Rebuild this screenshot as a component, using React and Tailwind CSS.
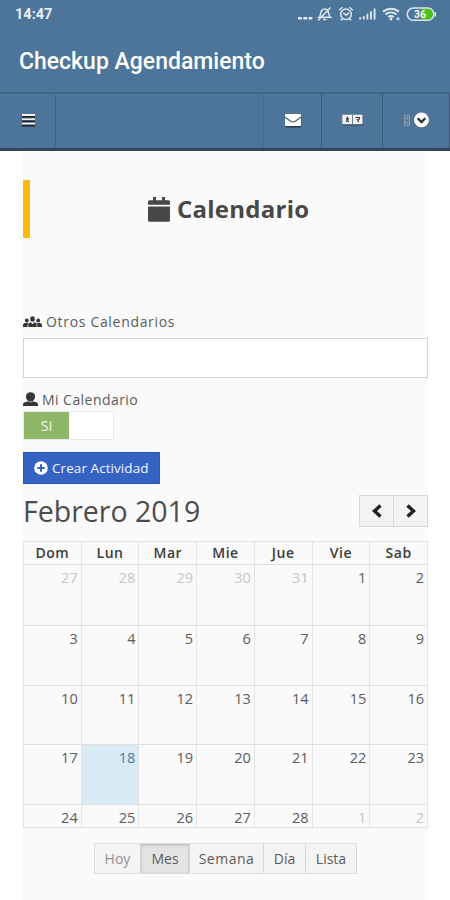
import clsx from 'clsx';

const weekDays = ['Dom', 'Lun', 'Mar', 'Mie', 'Jue', 'Vie', 'Sab'];

const weeks = [
  { height: 'h-[61px]', days: [27, 28, 29, 30, 31, 1, 2] },
  { height: 'h-[60px]', days: [3, 4, 5, 6, 7, 8, 9] },
  { height: 'h-[59px]', days: [10, 11, 12, 13, 14, 15, 16] },
  { height: 'h-[60px]', days: [17, 18, 19, 20, 21, 22, 23] },
  { height: 'h-[23px]', days: [24, 25, 26, 27, 28, 1, 2] },
];

const views = [
  { label: 'Hoy',    width: 'w-[46px]' },
  { label: 'Mes',    width: 'w-[49px]' },
  { label: 'Semana', width: 'w-[74px]' },
  { label: 'Día',    width: 'w-[42px]' },
  { label: 'Lista',  width: 'w-[51px]' },
];

const isOtherMonth = (week, day) =>
  (week === 0 && day > 20) || (week === 4 && day < 10);

function StatusIcons() {
  return (
    <svg width="140" height="18" viewBox="0 0 140 18" fill="none" stroke="#dbe7f1" strokeWidth="1.5">
      {/* dots */}
      <path d="M0 12h3.800v2.600H0zM5.300 12h3.800v2.600H5.300zM10.600 12h3.800v2.600h-3.800z" fill="#e6eef5" stroke="none" />
      {/* muted bell */}
      <path d="M21 12.300c2-1.200 1.300-4.800 2.700-6.800 1.500-1.900 4.700-1.900 6 0 1.200 2 .8 5.500 2.800 6.800zM25 14.400h3.500M20 15.500 32.500 2.500" />
      {/* alarm */}
      <circle cx="48" cy="9.200" r="5.300" />
      <path d="m45.300 7.800 2.700 2.400 3-2.400M41.200 5.200l3.200-3M54.800 5.200l-3.200-3M44.500 13.700 43 15.500M51.500 13.700l1.500 1.800" />
      {/* signal */}
      <path d="M62.200 12.200v2.300M65.800 11.200v3.300M69.400 8.800v5.700M73 6.300v8.200M76.600 3.500v11" strokeWidth="1.900" />
      {/* wifi */}
      <path d="M85 6.600c4.700-3.700 11.300-3.700 16 0M87.600 9.400c3.200-2.500 7.600-2.500 10.800 0M90.200 12c1.700-1.300 3.900-1.300 5.600 0" strokeWidth="2" />
      <circle cx="93" cy="14" r="1.400" fill="#e6eef5" stroke="none" />
      <circle cx="100" cy="13.800" r="1.700" fill="#a5cdf0" stroke="none" />
      {/* battery */}
      <path d="M123.500 4h6.500a5.200 5.200 0 0 1 0 10.400h-6.500z" fill="#4cc417" stroke="none" />
      <rect x="109.300" y="3" width="26.500" height="12.200" rx="6" strokeWidth="1.500" />
      <path d="M137.300 7v4.500" strokeWidth="1.500" />
      <text x="116" y="13" fill="#f4f8fb" stroke="none" fontSize="10.500" fontWeight="700" fontFamily="Roboto, sans-serif">36</text>
    </svg>
  );
}

function MenuIcon() {
  return (
    <svg width="15" height="15" viewBox="0 0 15 15">
      <path d="M1 3.500h13M1 8h13M1 12.500h13" stroke="#172029" strokeWidth="2" />
      <path d="M1 2h13M1 6.300h13M1 10.600h13" stroke="#f3f1e8" strokeWidth="1.800" />
    </svg>
  );
}

function MailIcon() {
  return (
    <svg width="18" height="15" viewBox="0 0 18 15">
      <rect x="1.200" y="2.200" width="16" height="12.300" rx="1.500" fill="#263b4f" />
      <rect x="1" y="1" width="16" height="12" rx="1" fill="#fff" />
      <path d="m1 4 5.300 3.900c1.600 1.200 3.800 1.200 5.400 0L17 4" fill="none" stroke="#59636b" strokeWidth="1.300" />
    </svg>
  );
}

function LanguageIcon() {
  return (
    <svg width="21" height="12" viewBox="0 0 21 12">
      <rect x=".5" y="1.500" width="20.300" height="10" rx=".8" fill="#2f475d" />
      <rect x=".3" y=".7" width="20.200" height="9.600" rx=".8" fill="#f4f4f2" />
      <path d="M10.500 1v9" stroke="#6a7d8d" />
      <path d="M5.400 2.500v1.700M4 4.600h3M6.200 5c-.2 1.400-1 2.200-2.200 2.900M4.500 5.500c.5 1.200 1.200 1.800 2.400 2.300M13.500 3.500h4.300M17.500 3.800c.3 1.300-.8 1.900-1.800 2.100.9.500.8 1.500.3 2.300" fill="none" stroke="#37424a" strokeWidth="1.200" />
    </svg>
  );
}

function AccountIcon() {
  return (
    <svg width="27" height="18" viewBox="0 0 27 18" fill="none">
      <path d="M1.500 4h5v10.500h-5zM3 6h2v2H3zM2 10l4 3M6 9.500 2.500 13.500" stroke="#95a0a8" strokeWidth=".9" />
      <circle cx="18.700" cy="9.900" r="7.300" fill="#263b4f" />
      <circle cx="18.500" cy="9" r="7.500" fill="#fff" />
      <path d="m14.700 7.300 3.800 3.800 3.800-3.800" stroke="#25313b" strokeWidth="2.300" />
    </svg>
  );
}

function CalendarIcon() {
  return (
    <svg width="22" height="25" viewBox="0 0 22 25" fill="#484848">
      <path d="M5 0h3v3.200h6V0h3v3.200h3.500A1.500 1.500 0 0 1 22 4.700v3H0v-3a1.500 1.500 0 0 1 1.500-1.500H5zM0 9.500h22v13.800a1.500 1.500 0 0 1-1.500 1.500h-19A1.500 1.500 0 0 1 0 23.300z" />
    </svg>
  );
}

function UsersIcon() {
  return (
    <svg className="mt-[2px]" width="19" height="12" viewBox="0 0 19 12" fill="#363636">
      <circle cx="3.800" cy="4.500" r="1.900" />
      <circle cx="15.200" cy="4.500" r="1.900" />
      <ellipse cx="9.500" cy="3" rx="2.300" ry="2.700" />
      <path d="M0 11V9.400c0-1.600.8-2 2.300-2.700.9.600 2.100.6 3 0l.4.300C4.800 7.800 4.500 9 4.500 11zM19 11V9.400c0-1.600-.8-2-2.300-2.700-.9.600-2.100.6-3 0l-.4.300c.9.800 1.200 2 1.200 4zM5.300 11V9c0-1.500.9-2.200 2.500-2.800l1.700 2 1.700-2c1.600.6 2.500 1.300 2.500 2.800v2z" />
    </svg>
  );
}

function UserIcon() {
  return (
    <svg className="mt-[1px]" width="15" height="15" viewBox="0 0 15 15" fill="#363636">
      <path d="M7.500.3c2.800 0 4.600 1.700 4.600 4.100 0 1.900-.9 3.500-2.100 4.300v.8H5v-.8C3.800 7.900 2.900 6.300 2.900 4.400 2.900 2 4.700.3 7.500.3zM0 14v-1.600c0-1.500 1.300-2.400 4.500-2.900 1.500 1 4.500 1 6 0 3.200.5 4.500 1.400 4.500 2.900V14z" />
    </svg>
  );
}

function PlusIcon() {
  return (
    <svg width="14" height="14" viewBox="0 0 14 14">
      <circle cx="7" cy="7" r="6.800" fill="#fff" />
      <path d="M7 3.300v7.400M3.300 7h7.400" stroke="#3463c4" strokeWidth="2" />
    </svg>
  );
}

function Chevron({ d }) {
  return (
    <svg width="13" height="14" viewBox="0 0 13 14" fill="none">
      <path d={d} stroke="#202020" strokeWidth="3.400" />
    </svg>
  );
}

function Header() {
  return (
    <header className="h-[151px] bg-[#4d7499] border-b-[3px] border-[#34455b]">
      <div className="flex h-[28px] items-center justify-between pl-[15px] pr-[12px]">
        <span className="pt-[3px] font-[Roboto,sans-serif] text-[14.500px] font-bold leading-none text-[#e7eff5]">14:47</span>
        <StatusIcons />
      </div>
      <div className="flex h-[64px] items-center pl-[19px] pt-[2px]">
        <h1 className="whitespace-nowrap font-[Roboto,sans-serif] text-[23px] font-medium leading-none text-white">
          Checkup Agendamiento
        </h1>
      </div>
      <nav className="flex h-[56px] justify-between border-t-2 border-[#42668a]">
        <button className="flex w-[56px] items-center justify-center border-r border-[#41658a] pb-[2px] pl-[2px]"><MenuIcon /></button>
        <div className="flex">
          <button className="flex w-[58px] items-center justify-center border-l border-[#456a8d] pb-[1px]"><MailIcon /></button>
          <button className="flex w-[61px] items-center justify-center border-l border-[#39597a] pb-[2px]"><LanguageIcon /></button>
          <button className="flex w-[68px] items-center justify-center border-x border-[#39597a] pb-[2px]"><AccountIcon /></button>
        </div>
      </nav>
    </header>
  );
}

function MonthGrid() {
  return (
    <div className="mt-[14px] border-l border-t border-[#e4e4e4]">
      <div className="grid h-[23px] grid-cols-7 border-b border-[#dcdcdc]">
        {weekDays.map((day) => (
          <div key={day} className="flex items-center justify-center border-r border-[#e4e4e4] text-[14px] font-semibold leading-none tracking-[0.5px] text-[#3c3c3c]">
            {day}
          </div>
        ))}
      </div>
      {weeks.map(({ height, days }, week) => (
        <div key={week} className={clsx('grid grid-cols-7 border-b border-[#e0e0e0]', height)}>
          {days.map((day) => (
            <div
              key={day}
              className={clsx(
                'border-r border-[#e4e4e4] pr-[3px] pt-[5px] text-right text-[14.500px] leading-[16px]',
                isOtherMonth(week, day) && 'text-[#c6c6c6]',
                day === 18 && 'bg-[#d9ecf6] text-[#4a7d9c]'
              )}
            >
              {day}
            </div>
          ))}
        </div>
      ))}
    </div>
  );
}

export default function App() {
  return (
    <div className="h-[900px] w-[450px] overflow-hidden bg-white font-['Open_Sans',sans-serif] text-[#5c5c5c]">
      <Header />
      <main className="ml-[23px] mr-[22px] h-[749px] bg-[#fafafa]">
        <div className="pt-[29px]">
          <div className="flex h-[58px] items-center border-l-[7px] border-[#fdbb07] pl-[118px]">
            <CalendarIcon />
            <h2 className="ml-[7px] text-[24px] font-bold leading-none tracking-[0.25px] text-[#484848]">Calendario</h2>
          </div>
        </div>

        <label className="mt-[73px] flex h-[20px] items-center gap-[4px] text-[14px] tracking-[0.68px]">
          <UsersIcon />
          Otros Calendarios
        </label>
        <div className="mt-[7px] h-[40px] border border-[#d5d5d5] bg-white" />

        <label className="mt-[11px] flex h-[20px] items-center gap-[4px] text-[14px] tracking-[0.45px]">
          <UserIcon />
          Mi Calendario
        </label>
        <div className="mt-[2px] flex h-[29px] w-[91px] border border-[#e9e9e9] bg-white">
          <span className="flex w-[45px] items-center justify-center bg-[#8fb768] text-[14px] text-[#eef5e8]">SI</span>
        </div>

        <button className="mt-[12px] flex h-[32px] w-[137px] items-center gap-[4px] border border-[#2857b7] bg-[#3463c4] pl-[10px] text-[13.500px] tracking-[0.07px] text-[#f2f6ff]">
          <PlusIcon />
          <span className="whitespace-nowrap">Crear Actividad</span>
        </button>

        <div className="mt-[11px] flex h-[32px] items-center justify-between">
          <h3 className="whitespace-nowrap text-[28.500px] leading-none text-[#4c4c4c]">Febrero 2019</h3>
          <div className="flex h-[32px] border border-[#d8d8d8] bg-[#f3f3f3]">
            <button className="flex w-[34px] items-center justify-center border-r border-[#d8d8d8] pb-[1px]"><Chevron d="M10.500 1.500 4.500 7l6 5.500" /></button>
            <button className="flex w-[33px] items-center justify-center pb-[1px] pl-[2px]"><Chevron d="m2.500 1.500 6 5.500-6 5.500" /></button>
          </div>
        </div>

        <MonthGrid />

        <div className="ml-[71px] mt-[15px] flex h-[31px] w-[263px] border border-r-0 border-[#dddddd] bg-[#f4f4f4]">
          {views.map(({ label, width }) => (
            <button
              key={label}
              className={clsx(
                'flex items-center justify-center border-r border-[#d6d6d6] pb-[1px] text-[14px]',
                width,
                label === 'Hoy' && 'text-[#929292]',
                label === 'Mes' && 'bg-[#e4e4e4] shadow-[inset_0_1px_3px_rgba(0,0,0,0.2)]',
                label === 'Semana' && 'tracking-[0.5px]'
              )}
            >
              {label}
            </button>
          ))}
        </div>
      </main>
    </div>
  );
}
